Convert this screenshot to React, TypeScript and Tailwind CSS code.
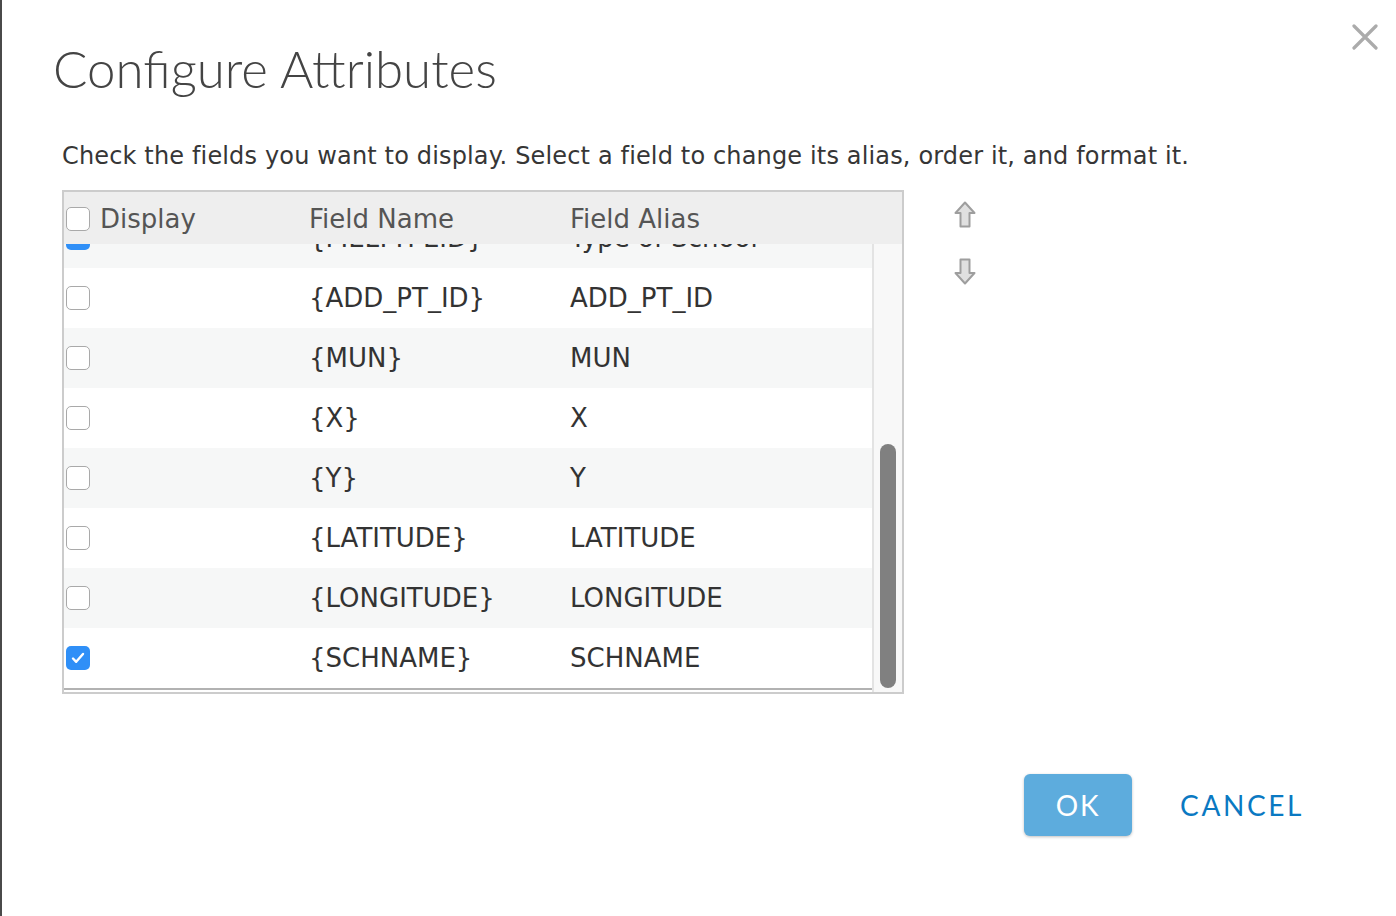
import React from "react";

type Row = { name: string; alias: string; checked: boolean };

const rows: Row[] = [
  { name: "{FIELTYPEID}", alias: "Type of School", checked: true },
  { name: "{ADD_PT_ID}", alias: "ADD_PT_ID", checked: false },
  { name: "{MUN}", alias: "MUN", checked: false },
  { name: "{X}", alias: "X", checked: false },
  { name: "{Y}", alias: "Y", checked: false },
  { name: "{LATITUDE}", alias: "LATITUDE", checked: false },
  { name: "{LONGITUDE}", alias: "LONGITUDE", checked: false },
  { name: "{SCHNAME}", alias: "SCHNAME", checked: true },
];

const Checkbox = ({ checked }: { checked: boolean }) =>
  checked ? (
    <span className="flex h-[24px] w-[24px] shrink-0 items-center justify-center rounded-[5px] bg-[#2f8ff7]">
      <svg width="16" height="16" viewBox="0 0 16 16" fill="none">
        <path d="M3 8.5l3.2 3.3L13 4" stroke="white" strokeWidth="2.4" strokeLinecap="round" strokeLinejoin="round" />
      </svg>
    </span>
  ) : (
    <span className="block h-[24px] w-[24px] shrink-0 rounded-[5px] border border-[#a9a9a9] bg-white"></span>
  );

const ArrowIcon = ({ down }: { down?: boolean }) => (
  <svg width="22" height="27" viewBox="0 0 22 27" className={down ? "rotate-180" : ""}>
    <path
      d="M11 1.5L20.5 12H15.5V25.5H6.5V12H1.5Z"
      fill="#e0e0e0"
      stroke="#9e9e9e"
      strokeWidth="2"
      strokeLinejoin="round"
    />
  </svg>
);

export default function App() {
  return (
    <div className="flex h-[916px] w-[1396px] overflow-hidden bg-white">
      {/* left page edge */}
      <div className="w-[2px] shrink-0 bg-[#4a4a4a]"></div>

      <div className="relative flex flex-1 flex-col pl-[51px]">
        {/* close */}
        <button className="absolute right-[18px] top-[24px]">
          <svg width="26" height="26" viewBox="0 0 26 26">
            <path d="M2 2L24 24M24 2L2 24" stroke="#ababab" strokeWidth="3.2" strokeLinecap="round" />
          </svg>
        </button>

        <h1
          className="mt-[37px] text-[51px] font-light leading-[64px] text-[#444444]"
          style={{ fontFamily: "Lato, 'Open Sans', sans-serif" }}
        >
          Configure Attributes
        </h1>

        <div
          className="[font-variant-ligatures:none]"
          style={{ fontFamily: "'DejaVu Sans', Verdana, sans-serif" }}
        >
          <p className="ml-[9px] mt-[39px] text-[24px] leading-[32px] tracking-[0.15px] text-[#363636]">
            Check the fields you want to display. Select a field to change its alias, order it, and format it.
          </p>

          <div className="ml-[9px] mt-[18px] flex items-start gap-[50px]">
            {/* table */}
            <div className="flex h-[504px] w-[842px] flex-col border-2 border-[#cccccc] text-[26px] text-[#333333]">
              <div className="flex h-[52px] shrink-0 items-center bg-[#eeeeee] pt-[2px] text-[#555555]">
                <div className="flex w-[245px] items-center gap-[10px] pl-[2px]">
                  <Checkbox checked={false} />
                  <span>Display</span>
                </div>
                <div className="w-[261px]">Field Name</div>
                <div>Field Alias</div>
              </div>

              <div className="flex min-h-0 flex-1">
                <div className="h-full w-[808px] overflow-hidden">
                  <div className="-mt-[36px] border-b-2 border-[#b2b2b2]">
                    {rows.map((r, i) => (
                      <div
                        key={r.name}
                        className={`flex h-[60px] items-center ${i % 2 === 0 ? "bg-[#f6f7f7]" : "bg-white"}`}
                      >
                        <div className="w-[245px] pl-[2px]">
                          <Checkbox checked={r.checked} />
                        </div>
                        <div className="w-[261px]">{r.name}</div>
                        <div>{r.alias}</div>
                      </div>
                    ))}
                  </div>
                </div>

                {/* scrollbar */}
                <div className="relative flex-1 border-l-2 border-[#e3e3e3] bg-[#f8f8f8]">
                  <div className="absolute bottom-[4px] left-[6px] h-[244px] w-[16px] rounded-full bg-[#808080]"></div>
                </div>
              </div>
            </div>

            {/* order arrows */}
            <div className="flex flex-col gap-[30px] pt-[11px]">
              <button>
                <ArrowIcon />
              </button>
              <button>
                <ArrowIcon down />
              </button>
            </div>
          </div>
        </div>

        {/* footer */}
        <div
          className="mt-[80px] flex items-center justify-end gap-[48px] pr-[92px]"
          style={{ fontFamily: "Lato, 'Open Sans', sans-serif" }}
        >
          <button className="h-[62px] w-[108px] rounded-[6px] bg-[#5dacdd] text-[28px] tracking-[2px] text-white shadow-[0_1px_3px_rgba(0,0,0,0.25)]">
            OK
          </button>
          <button className="text-[28px] tracking-[2.6px] text-[#0a79c2]">CANCEL</button>
        </div>
      </div>
    </div>
  );
}
